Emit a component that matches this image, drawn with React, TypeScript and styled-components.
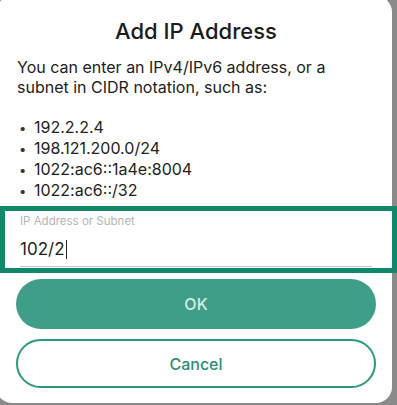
import React from "react";
import styled, { createGlobalStyle } from "styled-components";

const Global = createGlobalStyle`
  html, body {
    margin: 0;
    padding: 0;
    background: #8a8a8a;
    overflow: hidden;
  }
  body {
    font-family: Inter, "Noto Sans", "Liberation Sans", sans-serif;
    -webkit-font-smoothing: antialiased;
  }
`;

const Dialog = styled.div`
  box-sizing: border-box;
  margin: -4px 0 0 -4px;
  width: 396px;
  height: 407px;
  padding: 4px 0 0 4px;
  background: #ffffff;
  border-radius: 16px;
  display: flex;
  flex-direction: column;
`;

const Title = styled.h1`
  margin: 19px 0 0 0;
  font-size: 22px;
  line-height: 24px;
  font-weight: 500;
  color: #1c1c1c;
  text-align: center;
`;

const Intro = styled.p`
  margin: 14px 0 0 0;
  padding: 0 16px 0 17px;
  font-size: 16px;
  line-height: 20px;
  color: #222222;
`;

const List = styled.ul`
  list-style: none;
  margin: 20px 0 0 0;
  padding: 0;
`;

const Item = styled.li`
  display: flex;
  align-items: baseline;
  font-size: 16px;
  line-height: 20px;
  color: #222222;
  padding-left: 19px;

  &::before {
    content: "•";
    width: 15px;
    font-size: 13px;
    color: #333;
  }
`;

const FieldBox = styled.div`
  box-sizing: border-box;
  margin: 5px -5px 0 0;
  height: 67px;
  border: 5px solid #13876a;
  background: #ffffff;
  padding: 4px 20px 0 15px;
  display: flex;
  flex-direction: column;
`;

const FieldLabel = styled.span`
  font-size: 11.5px;
  line-height: 13px;
  color: #b5b5b5;
`;

const FieldValue = styled.div`
  margin-top: 10px;
  display: flex;
  align-items: center;
  font-size: 17px;
  line-height: 22px;
  color: #1e1e1e;
  padding-bottom: 6px;
  border-bottom: 1px solid #c4c4c4;
`;

const Caret = styled.span`
  display: inline-block;
  width: 1px;
  height: 19px;
  margin-left: 1px;
  background: #1e1e1e;
`;

const Actions = styled.div`
  display: flex;
  flex-direction: column;
  gap: 10px;
  margin: 6px 0 0 16px;
  width: 360px;
`;

const Button = styled.button<{ $variant: "filled" | "outline" }>`
  box-sizing: border-box;
  height: ${(p) => (p.$variant === "filled" ? "50px" : "49px")};
  border-radius: 25px;
  font-family: Inter, "Noto Sans", "Liberation Sans", sans-serif;
  font-size: 16px;
  font-weight: 500;
  cursor: pointer;
  background: ${(p) => (p.$variant === "filled" ? "#3f9e88" : "#ffffff")};
  color: ${(p) => (p.$variant === "filled" ? "#d3ebe4" : "#2b8f78")};
  border: ${(p) => (p.$variant === "filled" ? "none" : "2px solid #2a9a7e")};
`;

export default function App() {
  return (
    <>
      <Global />
      <Dialog>
        <Title>Add IP Address</Title>
        <Intro>You can enter an IPv4/IPv6 address, or a subnet in CIDR notation, such as:</Intro>
        <List>
          <Item>192.2.2.4</Item>
          <Item>198.121.200.0/24</Item>
          <Item>1022:ac6::1a4e:8004</Item>
          <Item>1022:ac6::/32</Item>
        </List>
        <FieldBox>
          <FieldLabel>IP Address or Subnet</FieldLabel>
          <FieldValue>
            102/2
            <Caret />
          </FieldValue>
        </FieldBox>
        <Actions>
          <Button $variant="filled">OK</Button>
          <Button $variant="outline">Cancel</Button>
        </Actions>
      </Dialog>
    </>
  );
}
